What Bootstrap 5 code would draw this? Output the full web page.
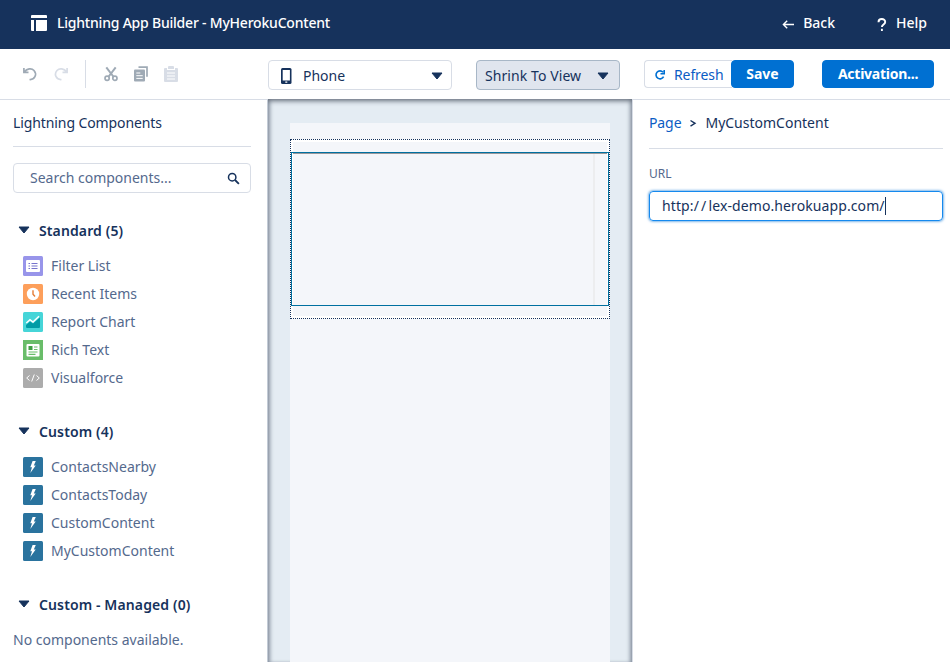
<!DOCTYPE html>
<html lang="en">
<head>
<meta charset="utf-8">
<meta name="viewport" content="width=device-width, initial-scale=1">
<title>Lightning App Builder</title>
<link href="https://cdn.jsdelivr.net/npm/bootstrap@5.3.0/dist/css/bootstrap.min.css" rel="stylesheet">
<script defer src="https://cdn.jsdelivr.net/npm/bootstrap@5.3.0/dist/js/bootstrap.bundle.min.js"></script>
<style>
:root{--navy:#16325c;--muted:#54698d;--line:#d8dde6;--blue:#0070d2}
body{font-family:"Noto Sans",sans-serif;font-size:14px;line-height:20px;color:var(--navy);height:662px;overflow:hidden;background:#fff}
svg{display:block;flex:none}
.topbar{height:49px;background:var(--navy);color:#fff;font-weight:500;padding:0 23px 3px 30px}
.app-title{margin-left:9px;letter-spacing:-.21px}
.help{margin-left:42px}
.help span{margin-left:9px}
.tools{height:50px;padding:11px 16px 0 22px}
.edit-icons{width:246px;height:28px}
.split{width:1px;height:28px;background:var(--line);margin:0 18px 0 16px}
.picker{height:30px;border:1px solid var(--line);border-radius:4px;background:#fff;color:var(--navy);padding-top:1px}
.picker-phone{width:184px;padding-left:12px;padding-right:8px}
.phone-name{margin-left:11px}
.picker-view{width:144px;margin-left:24px;padding-left:8px;padding-right:10px;background:#e0e5ee;border-color:#a8b7c7}
.picker-view span{letter-spacing:.08px}
.tool-btn{height:28px;border-radius:4px;line-height:18px;padding:0;font-size:14px;border:1px solid var(--blue);background:var(--blue);color:#fff;font-weight:700}
.tool-refresh{width:88px;margin-left:24px;background:#fff;border-color:var(--line);color:#0b5cc4;font-weight:400;border-right:0;border-radius:4px 0 0 4px;padding:2px 0 0 9px;letter-spacing:-.1px}
.tool-save{width:63px;margin-left:-1px}
.tool-activate{width:112px;margin-left:28px;letter-spacing:-.25px}
.work{height:563px}
.side-left{width:268px;border-top:1px solid var(--line);border-right:1px solid #c3cbd6;padding:13px 16px 0 13px}
.pane-title{padding-bottom:13px;border-bottom:1px solid var(--line);letter-spacing:-.1px}
.search{height:30px;margin-top:16px;border:1px solid var(--line);border-radius:4px;padding:0 10px 0 16px;color:var(--muted)}
.group-head{font-weight:600;padding-left:5px;gap:9px;height:20px;margin-top:28px;letter-spacing:.12px}
.group-head svg{margin-top:-2px}
.group-list{padding:0 0 0 10px;margin:11px 0 0}
.group-list li{height:28px;gap:8px;color:var(--muted)}
.group-list ~ .group-head{margin-top:30px}
.none-text{margin-top:15px;color:var(--muted)}
.stage{width:364px;background:#e4ecf3;padding:24px 22px 0;box-shadow:inset 0 3px 5px -1px #68717e,inset 4px 0 4px -2px #9da7b4,inset -4px 0 4px -2px #9da7b4}
.device{background:#f4f6fa;padding-top:16px}
.region{height:180px;border:1px dotted var(--navy);background:#fff;padding:2px 2px 0}
.region-fill{background:#f4f6fa;height:174px;padding-top:10px}
.selected{height:154px;margin:0 -2px;border:1px solid #0070a0;background:#fff}
.frame{height:152px;width:314px;background:#f4f6fa;border-top:1px solid #97989c;margin-left:1px}
.frame-edge{width:2px;margin-left:300px;height:151px;background:#ecedef}
.side-right{border-top:1px solid var(--line);border-left:1px solid var(--line);padding:13px 7px 0 16px}
.side-right .pane-title{padding-bottom:15px;letter-spacing:0}
.crumb-link{color:#0b5cc4;letter-spacing:-.1px}
.url-label{font-size:12px;line-height:18px;color:var(--muted);margin-top:16px}
.url-box{height:30px;margin:8px 0 0;border:1px solid #1589ee;border-radius:4px;box-shadow:0 0 3px #0070d2;padding-left:12px;letter-spacing:.1px}
.slashes{letter-spacing:2.200px}
.caret{width:1px;height:18px;background:var(--navy)}
</style>
</head>
<body>
<svg width="0" height="0" class="position-absolute">
<defs>
<symbol id="tri" viewBox="0 0 12 8"><path d="M1 1h10L6 7z" fill="#16325c" stroke="#16325c" stroke-linejoin="round"/></symbol>
<symbol id="bolt" viewBox="0 0 20 20"><rect width="20" height="20" rx="1.500" fill="#2a739e"/><path d="M9.600 4h3.200l-2 4.600h1.900L7.300 16l1.700-5.800H7.300z" fill="#fff"/></symbol>
</defs>
</svg>
<header class="topbar d-flex align-items-center">
<svg width="18" height="16" viewBox="0 0 18 16" fill="#fff"><path d="M2 0h14q1 0 1 1v2H1V1q0-1 1-1zM1 5h3v11H2q-1 0-1-1zM6 5h11v10q0 1-1 1H6z"/></svg>
<span class="app-title">Lightning App Builder - MyHerokuContent</span>
<span class="d-flex align-items-center ms-auto"><svg class="mt-1" width="13" height="11" viewBox="0 0 13 11" fill="none" stroke="#fff" stroke-width="1.400"><path d="M12 4.500H1.500M5.200 .7 1.400 4.500l3.800 3.800"/></svg><span class="ms-2">Back</span></span>
<span class="d-flex align-items-center help"><svg class="mt-1" width="10" height="14" viewBox="0 0 10 14" fill="none" stroke="#fff" stroke-width="1.900"><path d="M1.500 4.200C1.500 0 8.200 0 8.200 4c0 2.500-3.300 2.500-3.300 5"/><path d="M4.900 10.800v2.200"/></svg><span>Help</span></span>
</header>
<div class="tools d-flex align-items-start">
<div class="edit-icons d-flex align-items-center">
<svg width="16" height="16" viewBox="0 0 16 16" fill="none" stroke="#9faab5" stroke-width="1.700"><path d="M1.900 2v4.300h4.600M2.200 6C5 2.500 9.500 1.800 12 4.500c3.500 4 .5 9.500-4.500 9"/></svg>
<svg width="15" height="16" viewBox="1 0 15 16" fill="none" stroke="#d8dde6" stroke-width="1.700" class="ms-3 me-n1"><path d="M14.100 2v4.300H9.500M13.800 6C11 2.500 6.500 1.800 4 4.500c-3.500 4-.5 9.500 4.500 9"/></svg>
<span class="split"></span>
<svg width="14" height="16" viewBox="0 0 14 16" fill="none" stroke="#9faab5" stroke-width="1.700"><path d="M2.300 1.300 9.700 11M11.700 1.300 4.300 11" stroke-width="2"/><circle cx="3.100" cy="12.200" r="2.100"/><circle cx="10.900" cy="12.200" r="2.100"/></svg>
<svg width="14" height="16" viewBox="0 0 14 16" class="ms-3"><path d="M4.500 1.200H13v9.600" fill="none" stroke="#9faab5" stroke-width="1.700"/><rect y="3.500" width="11" height="12" rx="1" fill="#9faab5"/><path d="M2.300 7h4M2.300 9.700h6.400M2.300 12.400h6.400" stroke="#fff"/></svg>
<svg width="14" height="16" viewBox="0 0 14 16" class="ms-3"><path d="M1 2h2v2h8V2h2q1 0 1 1v12q0 1-1 1H1q-1 0-1-1V3q0-1 1-1zM4 1q0-1 1-1h4q1 0 1 1v2H4z" fill="#d8dde6"/><path d="M3 7h8M3 10h8M3 13h8" stroke="#fff"/></svg>
</div>
<div class="picker picker-phone d-flex align-items-center"><svg width="11" height="16" viewBox="0 0 11 16"><rect width="10.500" height="16" rx="1.500" fill="#16325c"/><path d="M1.700 2h7.200v10.500H1.700zM4.300 13.500h2v1.200h-2z" fill="#fff"/></svg><span class="phone-name">Phone</span><svg class="ms-auto" width="12" height="8"><use href="#tri"/></svg></div>
<div class="picker picker-view d-flex align-items-center"><span>Shrink To View</span><svg class="ms-auto" width="12" height="8"><use href="#tri"/></svg></div>
<button class="btn tool-btn tool-refresh d-flex align-items-center"><svg width="12" height="12" viewBox="0 0 12 12" fill="none" stroke="#0070d2" stroke-width="1.600"><path d="M9 3.200A4 4 0 1 0 9.600 7.700M10.200 1v3.800H6.500"/></svg><span class="ms-2">Refresh</span></button>
<button class="btn tool-btn tool-save">Save</button>
<button class="btn tool-btn tool-activate">Activation...</button>
</div>
<main class="work d-flex">
<aside class="side-left flex-shrink-0">
<div class="pane-title">Lightning Components</div>
<div class="search d-flex align-items-center justify-content-between"><span>Search components...</span><svg width="13" height="13" viewBox="0 0 13 13" fill="none" stroke="#16325c" stroke-width="1.500"><circle cx="5.200" cy="5.200" r="3.700"/><path d="m8 8 3.900 3.900" stroke-width="1.800"/></svg></div>
<div class="group-head d-flex align-items-center"><svg width="12" height="8"><use href="#tri"/></svg>Standard (5)</div>
<ul class="group-list list-unstyled">
<li class="d-flex align-items-center"><svg width="20" height="20"><rect width="20" height="20" rx="1.500" fill="#9895ea"/><rect x="3" y="4" width="14" height="12" rx="1" fill="#fff"/><path d="M5.500 7.500H7M5.500 10H7M5.500 12.500H7M8.500 7.500h6M8.500 10h6M8.500 12.500h6" stroke="#7774cc" stroke-width="1.200"/></svg>Filter List</li>
<li class="d-flex align-items-center"><svg width="20" height="20"><rect width="20" height="20" rx="1.500" fill="#fd9f5b"/><circle cx="10" cy="10" r="6.200" fill="#fff"/><path d="M10 6.200v4l2 2.300" stroke="#e47c35" stroke-width="1.400" fill="none"/></svg>Recent Items</li>
<li class="d-flex align-items-center"><svg width="20" height="20"><rect width="20" height="20" rx="1.500" fill="#46d5d8"/><path d="m3 13 4-3.500 3 2 7-6V15q0 1-1 1H4q-1 0-1-1z" fill="#009ca6"/><path d="m3.300 11 3.700-3.300 3 2.300 6-5.700" stroke="#fff" stroke-width="1.500" fill="none"/></svg>Report Chart</li>
<li class="d-flex align-items-center"><svg width="20" height="20"><rect width="20" height="20" fill="#69bd69"/><rect x="3.500" y="4" width="13" height="12.500" rx="1" fill="#fff"/><path d="M5.500 6h4v4h-4z" fill="#3f9f43"/><path d="M11 7h3.500M11 9.500h3.500M5.500 12h9M5.500 14.300h7" stroke="#69bd69" stroke-width="1.200"/></svg>Rich Text</li>
<li class="d-flex align-items-center"><svg width="20" height="20"><rect width="20" height="20" rx="1.500" fill="#acacac"/><path d="M6.500 7.500 3.700 10l2.800 2.500M13.500 7.500l2.800 2.500-2.800 2.500M11.300 6.500 8.700 13.500" stroke="#fff" fill="none"/></svg>Visualforce</li>
</ul>
<div class="group-head d-flex align-items-center"><svg width="12" height="8"><use href="#tri"/></svg>Custom (4)</div>
<ul class="group-list list-unstyled">
<li class="d-flex align-items-center"><svg width="20" height="20"><use href="#bolt"/></svg>ContactsNearby</li>
<li class="d-flex align-items-center"><svg width="20" height="20"><use href="#bolt"/></svg>ContactsToday</li>
<li class="d-flex align-items-center"><svg width="20" height="20"><use href="#bolt"/></svg>CustomContent</li>
<li class="d-flex align-items-center"><svg width="20" height="20"><use href="#bolt"/></svg>MyCustomContent</li>
</ul>
<div class="group-head d-flex align-items-center"><svg width="12" height="8"><use href="#tri"/></svg>Custom - Managed (0)</div>
<div class="none-text">No components available.</div>
</aside>
<section class="stage flex-shrink-0 d-flex flex-column">
<div class="device flex-grow-1"><div class="region"><div class="region-fill"><div class="selected"><div class="frame"><div class="frame-edge"></div></div></div></div></div></div>
</section>
<aside class="side-right flex-grow-1">
<div class="pane-title d-flex align-items-center"><span class="crumb-link">Page</span><svg class="mx-2" width="8" height="8" viewBox="0 0 8 8" fill="none" stroke="#16325c" stroke-width="1.400"><path d="m1.500 1.500 4.500 2.800-4.500 2.800"/></svg><span>MyCustomContent</span></div>
<div class="url-label">URL</div>
<div class="url-box d-flex align-items-center"><span>http:<span class="slashes">//</span>lex-demo.herokuapp.com/</span><span class="caret"></span></div>
</aside>
</main>
</body>
</html>
